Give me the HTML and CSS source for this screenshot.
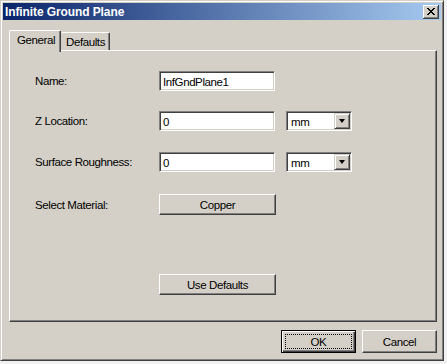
FILE: index.html
```html
<!DOCTYPE html>
<html>
<head>
<meta charset="utf-8">
<link rel="stylesheet" href="styles.css">
</head>
<body>
<div class="window">
  <div class="titlebar">
    <span class="title">Infinite Ground Plane</span>
    <div class="close">
      <svg width="16" height="14" viewBox="0 0 16 14" shape-rendering="crispEdges">
        <g fill="#000">
          <rect x="4" y="3" width="2" height="1"/><rect x="10" y="3" width="2" height="1"/>
          <rect x="5" y="4" width="2" height="1"/><rect x="9" y="4" width="2" height="1"/>
          <rect x="6" y="5" width="4" height="1"/>
          <rect x="7" y="6" width="2" height="1"/>
          <rect x="6" y="7" width="4" height="1"/>
          <rect x="5" y="8" width="2" height="1"/><rect x="9" y="8" width="2" height="1"/>
          <rect x="4" y="9" width="2" height="1"/><rect x="10" y="9" width="2" height="1"/>
        </g>
      </svg>
    </div>
  </div>
  <div class="content">
    <div class="tabs">
      <div class="tab active">General</div>
      <div class="tab">Defaults</div>
    </div>
    <div class="panel">
      <div class="row row-name">
        <span class="label">Name:</span>
        <div class="field">InfGndPlane1</div>
      </div>
      <div class="row row-z">
        <span class="label">Z Location:</span>
        <div class="field">0</div>
        <div class="select"><span class="sel-text">mm</span><span class="drop"><span class="arrow"></span></span></div>
      </div>
      <div class="row row-rough">
        <span class="label">Surface Roughness:</span>
        <div class="field">0</div>
        <div class="select"><span class="sel-text">mm</span><span class="drop"><span class="arrow"></span></span></div>
      </div>
      <div class="row row-mat">
        <span class="label">Select Material:</span>
        <div class="btn wide">Copper</div>
      </div>
      <div class="row row-def">
        <span class="label"></span>
        <div class="btn wide">Use Defaults</div>
      </div>
    </div>
    <div class="actions">
      <div class="btn action default"><span class="focus">OK</span></div>
      <div class="btn action">Cancel</div>
    </div>
  </div>
</div>
</body>
</html>
```

FILE: styles.css
```css
html, body {
  margin: 0;
  padding: 0;
}
body {
  background: #f1f1f1;
  width: 447px;
  height: 364px;
  overflow: hidden;
  font-family: "Liberation Sans", Arial, sans-serif;
  font-size: 11.5px;
  letter-spacing: -0.4px;
  color: #000;
}
.window {
  box-sizing: border-box;
  width: 444px;
  height: 361px;
  background: #d4d0c8;
  border: 1px solid;
  border-color: #d4d0c8 #404040 #404040 #d4d0c8;
  box-shadow: inset 1px 1px #fff, inset -1px -1px #808080;
  padding: 2px;
  display: flex;
  flex-direction: column;
}
.titlebar {
  height: 18px;
  background: linear-gradient(to right, #0a246a, #a6caf0);
  display: flex;
  align-items: center;
  justify-content: space-between;
  padding: 0 2px 0 2px;
}
.title {
  color: #fff;
  font-weight: bold;
  font-size: 12px;
  letter-spacing: -0.1px;
  padding-top: 1px;
}
.close {
  box-sizing: border-box;
  width: 16px;
  height: 14px;
  background: #d4d0c8;
  box-shadow: inset -1px -1px #404040, inset 1px 1px #fff, inset -2px -2px #808080;
  display: flex;
}
.close svg {
  display: block;
}
.content {
  flex: 1;
  display: flex;
  flex-direction: column;
  padding: 10px 4px 5px 6px;
}
.tabs {
  display: flex;
  align-items: flex-end;
  height: 20px;
  position: relative;
  z-index: 1;
}
.tab {
  box-sizing: border-box;
  height: 18px;
  padding: 0 5px 0 5px;
  border-top: 1px solid #fff;
  border-left: 1px solid #fff;
  border-right: 1px solid #404040;
  box-shadow: inset -1px 0 #808080;
  border-top-left-radius: 2px;
  border-top-right-radius: 2px;
  display: flex;
  align-items: center;
  background: #d4d0c8;
}
.tab.active {
  height: 22px;
  margin-bottom: -2px;
  width: 52px;
  padding-left: 7px;
  padding-bottom: 3px;
}
.tab:not(.active) {
  width: 49px;
  padding-left: 5px;
  padding-top: 1px;
  border-left: none;
}
.panel {
  box-sizing: border-box;
  height: 272px;
  border: 1px solid;
  border-color: #fff #404040 #404040 #fff;
  box-shadow: inset -1px -1px #808080;
  padding: 20px 0 0 25px;
  display: flex;
  flex-direction: column;
}
.row {
  display: flex;
  align-items: center;
}
.label {
  width: 124px;
  flex: none;
}
.row-z { margin-top: 20px; }
.row-rough { margin-top: 21px; }
.row-mat { margin-top: 22px; }
.row-def { margin-top: 59px; }
.field {
  box-sizing: border-box;
  width: 116px;
  height: 20px;
  background: #fff;
  border: 1px solid;
  border-color: #808080 #fff #fff #808080;
  box-shadow: inset 1px 1px #404040, inset -1px -1px #d4d0c8;
  padding: 1px 3px 0 3px;
  display: flex;
  align-items: center;
}
.select {
  box-sizing: border-box;
  width: 66px;
  height: 20px;
  margin-left: 11px;
  background: #fff;
  border: 1px solid;
  border-color: #808080 #fff #fff #808080;
  box-shadow: inset 1px 1px #404040, inset -1px -1px #d4d0c8;
  padding: 1px 1px 1px 1px;
  display: flex;
  align-items: center;
  justify-content: space-between;
}
.sel-text {
  padding-left: 3px;
  padding-top: 2px;
}
.drop {
  box-sizing: border-box;
  width: 16px;
  height: 16px;
  background: #d4d0c8;
  border: 1px solid;
  border-color: #d4d0c8 #404040 #404040 #d4d0c8;
  box-shadow: inset 1px 1px #fff, inset -1px -1px #808080;
  display: flex;
  align-items: center;
  justify-content: center;
}
.arrow {
  width: 0;
  height: 0;
  border-left: 3.5px solid transparent;
  border-right: 3.5px solid transparent;
  border-top: 4px solid #000;
}
.btn {
  box-sizing: border-box;
  background: #d4d0c8;
  border: 1px solid;
  border-color: #fff #404040 #404040 #fff;
  box-shadow: inset -1px -1px #808080;
  display: flex;
  align-items: center;
  justify-content: center;
}
.btn.wide {
  width: 117px;
  height: 21px;
}
.actions {
  display: flex;
  justify-content: flex-end;
  gap: 6px;
  margin-top: 8px;
}
.btn.action {
  width: 75px;
  height: 23px;
}
.btn.default {
  border: 1px solid #000;
  box-shadow: inset 1px 1px #fff, inset -1px -1px #404040, inset -2px -2px #808080;
  padding: 3px;
}
.focus {
  box-sizing: border-box;
  flex: 1;
  align-self: stretch;
  border: 1px dotted #000;
  display: flex;
  align-items: center;
  justify-content: center;
}
```
